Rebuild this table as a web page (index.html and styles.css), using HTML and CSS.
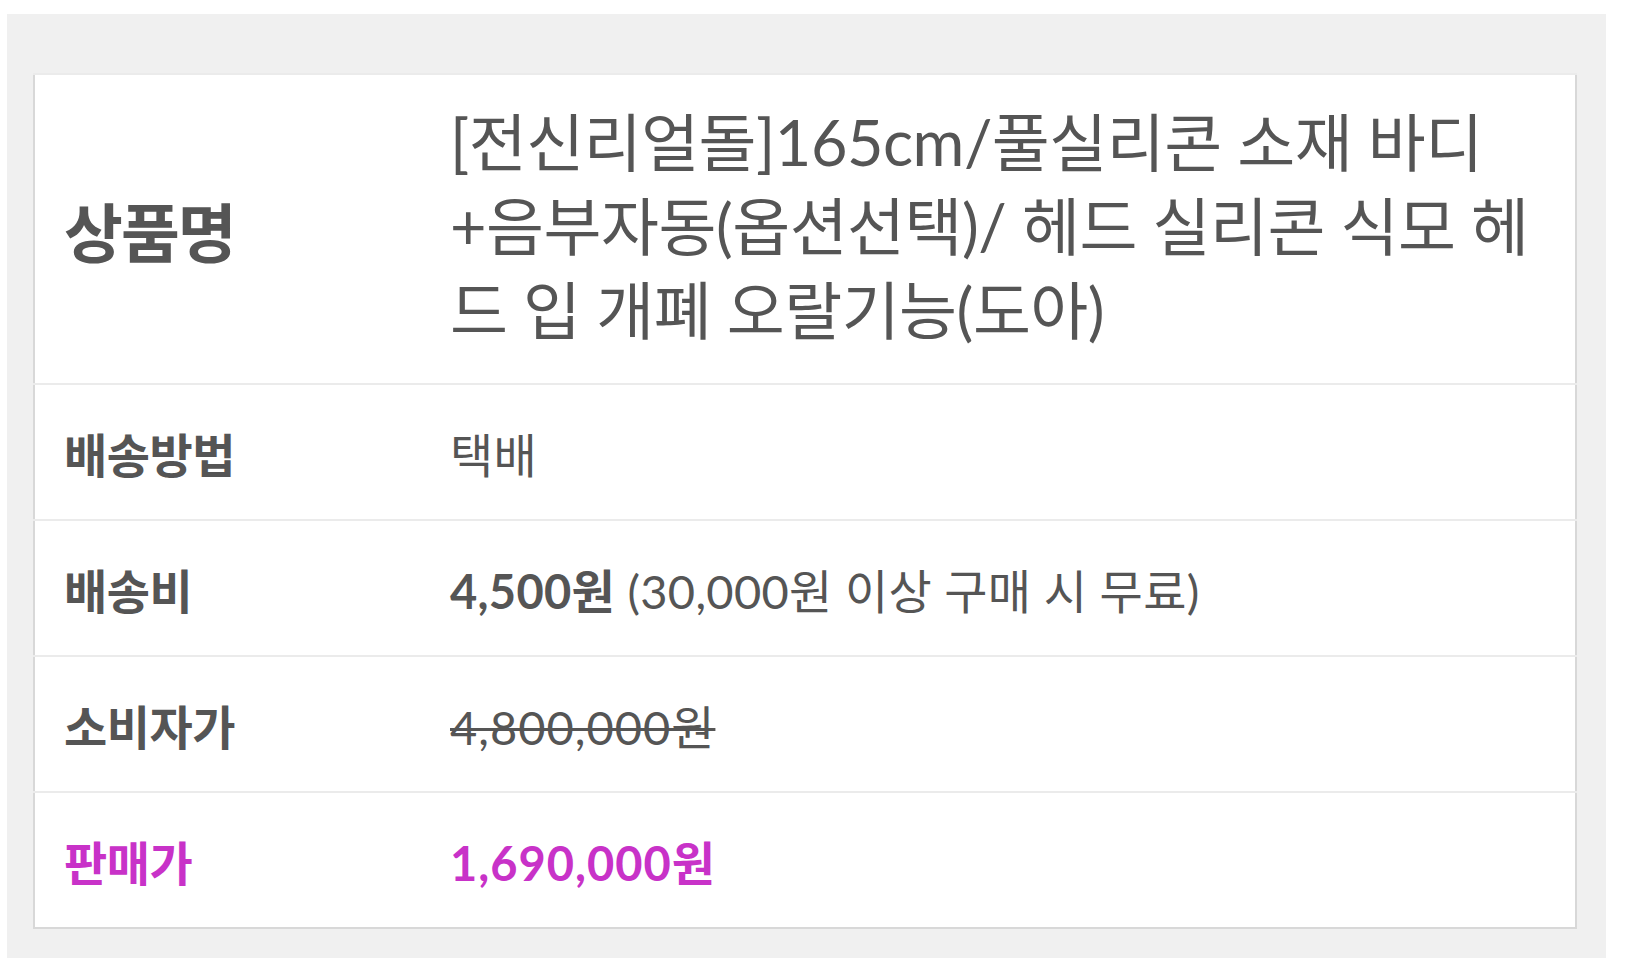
FILE: index.html
```html
<!DOCTYPE html>
<html lang="ko">
<head>
<meta charset="utf-8">
<title>상품 정보</title>
<link rel="stylesheet" href="styles.css">
</head>
<body>
<div class="panel">
  <table class="info">
    <tr class="title-row">
      <th class="label">상품명</th>
      <td class="value title">[전신리얼돌]165cm/풀실리콘 소재 바디 +음부자동(옵션선택)/ 헤드 실리콘 식모 헤드 입 개폐 오랄기능(도아)</td>
    </tr>
    <tr>
      <th class="label">배송방법</th>
      <td class="value">택배</td>
    </tr>
    <tr>
      <th class="label">배송비</th>
      <td class="value"><strong>4,500원</strong> (30,000원 이상 구매 시 무료)</td>
    </tr>
    <tr>
      <th class="label">소비자가</th>
      <td class="value"><del class="price">4,800,000원</del></td>
    </tr>
    <tr class="sale">
      <th class="label">판매가</th>
      <td class="value"><strong class="price">1,690,000원</strong></td>
    </tr>
  </table>
</div>
</body>
</html>
```

FILE: styles.css
```css
html, body {
  margin: 0;
  padding: 0;
  background: #ffffff;
}

body {
  font-family: Lato, "Noto Sans CJK KR", sans-serif;
  color: #555555;
}

.panel {
  margin: 14px 24px 0 7px;
  padding: 59px 29px 29px 26px;
  background: #f0f0f0;
}

.info {
  width: 100%;
  border-collapse: collapse;
  background: #ffffff;
  border: 2px solid #d8d8d8;
}

.info tr {
  border-top: 2px solid #ebebeb;
}

.info th,
.info td {
  vertical-align: middle;
  text-align: left;
  padding: 0;
}

.label {
  width: 386px;
  padding-left: 29px !important;
  font-size: 47px;
  font-weight: 700;
  height: 134px;
  letter-spacing: -0.5px;
}

.value {
  font-size: 47px;
  font-weight: 400;
  padding-right: 40px !important;
  letter-spacing: 0.3px;
}

.value .price {
  letter-spacing: 1px;
}

.title-row .label {
  font-size: 64px;
  height: 308px;
  letter-spacing: -2px;
}

.title {
  font-size: 63px;
  line-height: 84px;
  letter-spacing: -0.5px;
  word-break: break-all;
  padding-top: 0 !important;
  padding-bottom: 6px !important;
  padding-right: 30px !important;
}

.value strong {
  font-weight: 700;
}

.value del {
  text-decoration-thickness: 3px;
}

.sale .label,
.sale .value {
  color: #c832c8;
}
```
